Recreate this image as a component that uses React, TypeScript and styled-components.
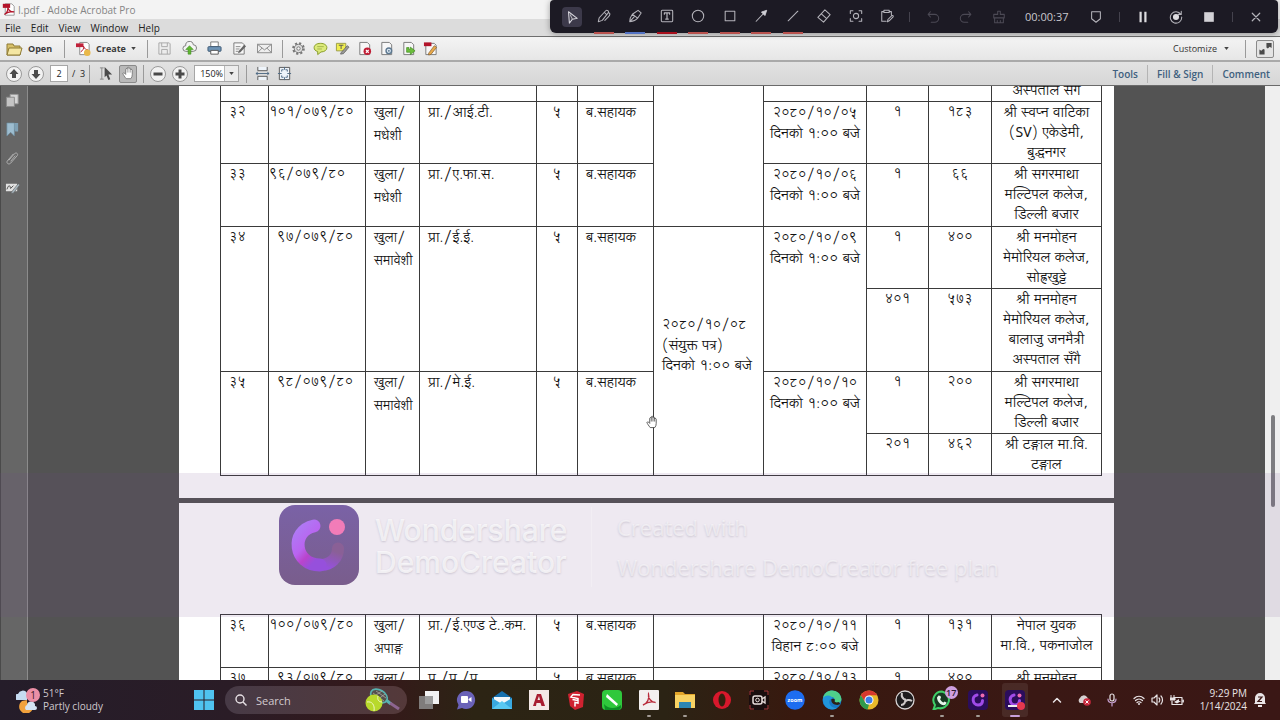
import React from 'react';
import styled, { createGlobalStyle, css } from 'styled-components';

const UI = '"Open Sans", "Noto Sans", sans-serif';
const NEPALI = '"Lohit Devanagari", "Noto Sans", serif';

const GlobalStyle = createGlobalStyle`
  * { box-sizing: border-box; }
  body { margin: 0; overflow: hidden; font-family: ${UI}; font-size: 10px; color: #222; }
  button, input, select { font: inherit; color: inherit; padding: 0; margin: 0; border: 0; background: none; }
  svg { display: block; flex: none; }
`;

const Screen = styled.div`
  display: flex;
  flex-direction: column;
  height: 100vh;
  position: relative;
`;

/* ---------- window chrome ---------- */

const TitleBar = styled.header`
  display: flex;
  align-items: center;
  gap: 3px;
  height: 19px;
  flex: none;
  padding-left: 2px;
  background: #f3f3f3;
  color: #858585;
`;

const MenuBar = styled.nav`
  display: flex;
  align-items: center;
  gap: 10px;
  height: 18px;
  flex: none;
  padding-left: 5px;
  background: #dcdcdc;
  border-bottom: 1px solid #6e6e6e;
`;

const MenuButton = styled.button`
  line-height: 16px;
`;

const ToolBar = styled.div<{ $last?: boolean }>`
  display: flex;
  align-items: center;
  height: ${p => (p.$last ? 24 : 25)}px;
  flex: none;
  padding: 0 6px 0 ${p => (p.$last ? 5 : 6)}px;
  background: ${p => (p.$last ? 'linear-gradient(#e2e2e2, #d6d6d6)' : 'linear-gradient(#f4f4f4, #e6e6e6)')};
  border-bottom: ${p => (p.$last ? '1px solid #6a6a6a' : '2px solid #a9a9a9')};
`;

const Separator = styled.span<{ $before: number; $after: number }>`
  width: 1px;
  height: 18px;
  margin-left: ${p => p.$before}px;
  margin-right: ${p => p.$after}px;
  background: #9a9a9a;
`;

const TextButton = styled.button`
  display: flex;
  align-items: center;
  gap: 5px;
  font-size: 9px;
  font-weight: 700;
  color: #3a3a3a;
`;

const IconGroup = styled.div<{ $gap: number }>`
  display: flex;
  align-items: center;
  gap: ${p => p.$gap}px;
`;

const IconButton = styled.button<{ $on?: boolean; $raised?: boolean }>`
  display: flex;
  align-items: center;
  justify-content: center;
  width: 18px;
  height: 18px;
  flex: none;
  ${p => (p.$on || p.$raised) && css`
    background: ${p.$on ? '#b9b9b9' : '#e4e4e4'};
    border: 1px solid #8a8a8a;
    border-radius: 2px;
  `}
`;

const PageInput = styled.input`
  width: 18px;
  height: 17px;
  margin-left: 5px;
  border: 1px solid #a6a6a6;
  background: #fff;
  text-align: center;
  font-size: 9px;
`;

const PageCount = styled.span`
  margin-left: 4px;
  font-size: 9px;
  white-space: pre;
`;

const ZoomBox = styled.div`
  display: flex;
  align-items: center;
  width: 45px;
  height: 17px;
  margin-left: 5px;
  border: 1px solid #a6a6a6;
  background: #fff;
`;

const ZoomSelect = styled.select`
  appearance: none;
  width: 29px;
  padding-left: 5px;
  font-size: 9px;
`;

const ZoomArrow = styled.span`
  display: flex;
  align-items: center;
  justify-content: center;
  flex: 1;
  height: 100%;
  border-left: 1px solid #b8b8b8;
  background: #ececec;
`;

const Spacer = styled.div`
  flex: 1;
`;

const CustomizeButton = styled.button`
  display: flex;
  align-items: center;
  gap: 7px;
  font-size: 9px;
  color: #333;
`;

const PaneLink = styled.button`
  padding: 0 9px;
  height: 18px;
  font-size: 10px;
  font-weight: 600;
  color: #40607e;
  & + & { border-left: 1px solid #b4b4b4; }
  &:last-child { padding-right: 4px; }
`;

/* ---------- recorder bar ---------- */

const Recorder = styled.div`
  position: absolute;
  top: 0;
  right: 2px;
  display: flex;
  align-items: center;
  height: 33px;
  padding: 0 12px;
  background: #1c1a24;
  border-radius: 4px 4px 6px 6px;
  box-shadow: 0 1px 6px rgba(0, 0, 0, 0.35);
  color: #b4b3ba;
`;

const RecorderTools = styled.div`
  display: flex;
  justify-content: space-between;
  width: 335px;
`;

const RecorderButton = styled.button<{ $on?: boolean; $ink?: string; $dim?: boolean }>`
  display: flex;
  align-items: center;
  justify-content: center;
  width: 20px;
  height: 33px;
  color: ${p => (p.$dim ? '#4b4954' : 'inherit')};
  border-bottom: 1px solid ${p => p.$ink || 'transparent'};
  border-top: 1px solid transparent;
  ${p => p.$ink && css`box-shadow: 0 1px 0 ${p.$ink};`}
  ${p => p.$on && css`
    height: 20px;
    margin: 7px 0;
    border: 0;
    border-radius: 4px;
    background: #3c394a;
  `}
`;

const RecorderRule = styled.span`
  width: 1px;
  height: 10px;
  background: #44424d;
`;

const RecorderSide = styled.div<{ $gap: number; $before: number }>`
  display: flex;
  align-items: center;
  gap: ${p => p.$gap}px;
  margin-left: ${p => p.$before}px;
`;

const Timer = styled.time`
  width: 44px;
  margin-left: 16px;
  font-size: 11px;
  color: #c9c8ce;
`;

/* ---------- document area ---------- */

const Workspace = styled.main`
  position: relative;
  display: flex;
  flex: 1;
  min-height: 0;
  overflow: hidden;
  background: #535353;
`;

const Rail = styled.aside`
  display: flex;
  flex-direction: column;
  gap: 11px;
  align-items: center;
  width: 28px;
  flex: none;
  padding: 5px 3px 0 0;
  background: #666;
  border-left: 1px solid #4a4a4a;
  border-right: 1px solid #8c8c8c;
`;

const DocumentView = styled.div`
  flex: 1;
  overflow: hidden;
`;

const Pages = styled.div`
  display: flex;
  flex-direction: column;
  align-items: center;
  gap: 5px;
  margin-top: -7px;
`;

const Page = styled.section<{ $top?: number }>`
  width: 935px;
  padding: ${p => p.$top || 0}px 13px 22px 41px;
  background: #fff;
`;

const ScheduleTable = styled.table`
  width: 100%;
  table-layout: fixed;
  border-collapse: collapse;
  font-family: ${NEPALI};
  font-size: 14px;
  line-height: 20px;
  color: #111;
`;

const Row = styled.tr<{ $h: number }>`
  height: ${p => p.$h}px;
`;

const Cell = styled.td<{ $pad?: number; $center?: boolean; $num?: boolean; $loose?: boolean; $middle?: boolean }>`
  padding: 1px 0 0 ${p => (p.$center ? 0 : p.$pad ?? 8)}px;
  border: 1px solid #3a3a3a;
  vertical-align: ${p => (p.$middle ? 'middle' : 'top')};
  text-align: ${p => (p.$center ? 'center' : 'left')};
  white-space: nowrap;
  ${p => p.$num && css`font-size: 13px;`}
  ${p => p.$loose && css`
    font-size: 13px;
    line-height: 23px;
    padding-top: 0;
  `}
  ${p => p.$middle && css`padding-bottom: 12px;`}
`;

const Digits = styled.span`
  font-size: 13px;
`;

const ScrollBar = styled.div`
  display: flex;
  flex-direction: column;
  align-items: center;
  width: 15px;
  flex: none;
  background: #efefef;
`;

const ScrollThumb = styled.div`
  width: 4px;
  height: 92px;
  margin-top: 329px;
  border-radius: 2px;
  background: #7d7d80;
`;

const Watermark = styled.div`
  position: absolute;
  top: 387px;
  left: 0;
  right: 0;
  display: flex;
  height: 144px;
  padding: 32px 0 0 279px;
  background: rgba(115, 75, 140, 0.12);
  color: rgba(255, 255, 255, 0.7);
  text-shadow: 0 1px 2px rgba(90, 80, 110, 0.22);
  pointer-events: none;
`;

const Brand = styled.div`
  width: 232px;
  padding: 9px 0 0 16px;
  font: 500 30px/32px Inter, sans-serif;
`;

const Credit = styled.div`
  height: 80px;
  margin-top: 2px;
  padding-left: 25px;
  border-left: 1px solid rgba(255, 255, 255, 0.25);
  font-size: 22px;
  line-height: 40px;
  color: rgba(255, 255, 255, 0.5);
`;

const HandCursor = styled.svg`
  position: absolute;
  left: 646px;
  top: 329px;
`;

/* ---------- taskbar ---------- */

const TaskBar = styled.footer`
  display: flex;
  align-items: center;
  height: 40px;
  flex: none;
  padding: 0 10px 0 16px;
  color: #e9e4e6;
  background: linear-gradient(90deg, #251d2a 0%, #2a1c26 18%, #35191a 30%, #2c2414 37%, #2b2314 52%, #38190f 62%, #3a1814 80%, #3a1715 100%);
`;

const Weather = styled.button`
  display: flex;
  align-items: center;
  gap: 3px;
  width: 175px;
  text-align: left;
  line-height: 13px;
`;

const WeatherText = styled.span`
  display: flex;
  flex-direction: column;
  color: #cfc8cd;
`;

const SearchBox = styled.label`
  display: flex;
  align-items: center;
  gap: 9px;
  width: 182px;
  height: 28px;
  margin-left: 8px;
  padding: 0 6px 0 10px;
  border-radius: 14px;
  background: linear-gradient(90deg, #473a46, #54393a);
`;

const SearchInput = styled.input`
  flex: 1;
  min-width: 0;
  font-size: 11px;
  outline: none;
  &::placeholder { color: #d2cacf; opacity: 1; }
`;

const Apps = styled.div`
  display: flex;
  justify-content: space-between;
  width: 612px;
  margin-left: 9px;
`;

const AppButton = styled.button<{ $active?: boolean }>`
  position: relative;
  display: flex;
  align-items: center;
  justify-content: center;
  width: 26px;
  height: 34px;
  border-radius: 3px;
  ${p => p.$active && css`background: rgba(255, 255, 255, 0.08);`}
`;

const RunningMark = styled.span<{ $wide?: boolean }>`
  position: absolute;
  bottom: 0;
  left: ${p => (p.$wide ? 8 : 11)}px;
  right: ${p => (p.$wide ? 8 : 11)}px;
  height: 2px;
  border-radius: 1px;
  background: ${p => (p.$wide ? '#c9a0dc' : '#a39c96')};
`;

const Badge = styled.span`
  position: absolute;
  top: 3px;
  right: -3px;
  min-width: 13px;
  height: 13px;
  border-radius: 7px;
  background: #cf9fe0;
  color: #2a1a33;
  font-size: 9px;
  font-weight: 600;
  line-height: 13px;
`;

const Tray = styled.div`
  display: flex;
  align-items: center;
  gap: 16px;
  margin-left: 24px;
`;

const QuickSettings = styled.button`
  display: flex;
  align-items: center;
  gap: 6px;
`;

const Clock = styled.button`
  width: 52px;
  margin-right: 3px;
  text-align: right;
  line-height: 13px;
  white-space: nowrap;
`;

/* ---------- drawings ---------- */

const AcrobatMark = ({ size }: { size: number }) => (
  <svg width={size} height={size} viewBox="0 0 16 16">
    <path d="M4 1h8l3 3v11H4z" fill="#fff" stroke="#888" />
    <path d="M1 1h9v5H1z" fill="#b3142a" />
    <path d="M3 14c3-1 5-6 4-9 1 4 4 6 8 6-5-1-8 0-12 3z" fill="none" stroke="#b3142a" strokeWidth="1.5" />
  </svg>
);

const Caret = () => <svg width="5" height="3" viewBox="0 0 6 4"><path d="M0 0h6L3 4z" fill="#444" /></svg>;

const Sheet = () => <path d="M3 1.500h8l2.500 2.500v10.500h-10.500z" fill="#f7f7f7" stroke="#777" />;

const fileIcons: Record<string, React.ReactNode> = {
  Save: <path d="M2 2h11l1 1v11H2zM5 2v4h6V2M5 14V9h6v5" fill="#ececec" stroke="#a8a8a8" />,
  'Save online': <><path d="M4 11a3 3 0 0 1 0-6 4 4 0 0 1 8-1 3.500 3.500 0 0 1 0 7z" fill="#f4f4f4" stroke="#777" /><path d="M8 5l4 4h-2.500v5h-3V9H4z" fill="#5fb830" stroke="#3c8a1c" strokeWidth=".6" /></>,
  Print: <><path d="M4 1h8v5H4z" fill="#fff" stroke="#777" /><rect x="1" y="6" width="14" height="5" rx="1" fill="#6d93b5" stroke="#3f5a74" /><path d="M4 10h8v4H4z" fill="#fff" stroke="#555" /></>,
  Sign: <><path d="M2 2h9l2 2v10H2z" fill="#f7f7f7" stroke="#777" /><path d="M4 6h5M4 8.500h4M4 11h3" stroke="#888" /><path d="M7 11l6-7 2 1.500-6 6.500-2.500 1z" fill="#666" /></>,
  Mail: <path d="M.500 3.500h15v9h-15zM.500 3.500l7.500 6 7.500-6M.500 12.500l5-5M15.500 12.500l-5-5" fill="#eee" stroke="#888" />,
};

const toolIcons: Record<string, React.ReactNode> = {
  Settings: <><circle cx="8" cy="8" r="5.500" fill="none" stroke="#777" strokeWidth="2.500" strokeDasharray="2.200 2.120" /><circle cx="8" cy="8" r="4.500" fill="#ddd" stroke="#777" /><circle cx="8" cy="8" r="1.800" fill="#f5f5f5" stroke="#777" /></>,
  'Sticky note': <><path d="M8 2.500c4.200 0 6.800 2 6.800 4.600S12.200 11.700 8.500 11.700L5 14.500v-3.300C2.300 10.500 1.200 9 1.200 7.100 1.200 4.500 3.800 2.500 8 2.500z" fill="#dcea7a" stroke="#859a28" /><path d="M4.500 6h7M4.500 8.500h5" stroke="#a3b54a" /></>,
  Highlight: <><path d="M1.500 2.500h10v8h-10z" fill="#f1ee4e" stroke="#999a4a" /><path d="M4 4.500h5M6.500 4.500v4" stroke="#555" /><path d="M6 13l7-8 2 1.500-6 7-3 .500z" fill="#999" stroke="#555" strokeWidth=".7" /></>,
  'Delete page': <><Sheet /><circle cx="11" cy="11" r="4" fill="#c01c34" /><path d="M9.500 9.500l3 3m0-3l-3 3" stroke="#fff" strokeWidth="1.300" /></>,
  'Page options': <><Sheet /><circle cx="10.500" cy="10.500" r="3" fill="#dbe8f2" stroke="#5d7890" strokeWidth="1.500" /><circle cx="10.500" cy="10.500" r="1" fill="#5d7890" /></>,
  'Export page': <><Sheet /><path d="M6 7v5h4v2.500l5-4-5-4V9H8.500V7z" fill="#6cbf3c" stroke="#3f8a1e" strokeWidth=".7" /></>,
  'Edit PDF': <><path d="M3 2.500h9l2 2v10H3z" fill="#f7f7f7" stroke="#777" /><path d="M1 1.500h8v4H1z" fill="#b3142a" /><path d="M6 13l6-8 2.500 1.800-6 7.500-2.500.700z" fill="#e8a94a" stroke="#7e5a30" strokeWidth=".7" /></>,
};

const Icon = ({ children }: { children: React.ReactNode }) => <svg width="15" height="15" viewBox="0 0 16 16" fill="none">{children}</svg>;

const RoundArrow = ({ d }: { d: string }) => (
  <svg width="18" height="18" viewBox="0 0 18 18">
    <circle cx="9" cy="9" r="7.500" fill="#f2f2f2" stroke="#999" />
    <path d={d} fill="#4a4a4a" />
  </svg>
);

const handPath = 'M4.500 13.500C3 11.500 1.500 9.500 1 8c.500-1 1.500-.700 2 0l1 1V3.500c.300-1 1.500-1 1.700 0V2c.300-1 1.600-1 1.800 0v.800c.300-.900 1.500-.900 1.800 0v1.400c.400-.800 1.600-.700 1.700.300V9c0 2-.500 3-1.500 4.500z';
const fingerPath = 'M5.700 3.500V7M7.500 2.500V7M9.300 3.500V7';

const line = { fill: 'none', stroke: 'currentColor', strokeWidth: 1.2, strokeLinejoin: 'round' as const, strokeLinecap: 'round' as const };

const recorderTools: { name: string; ink?: string; on?: boolean; art: React.ReactNode }[] = [
  { name: 'Select', on: true, art: <><path d="M4 2l10 7.500-5.500 1L5 15z" {...line} stroke="#d8d7de" /><path d="M6 5.500l2.500 5" {...line} /></> },
  { name: 'Pen', ink: '#b9534f', art: <path d="M1.500 14.500l1-4.500L10 2c1.500-1.500 4 .500 2.800 2.500L6 13zM8.500 4L11 6.500M14 4.500c1.500 1.500.500 3-1 4.500L9 13" {...line} /> },
  { name: 'Highlighter', ink: '#5373c4', art: <path d="M2 14.500c0-3 1-6 3-8.500L11.500 1.500l3.500 3-4 6C9 13 6 14 2 14.500zM2 14.500L7 9M5 6l6 4.500" {...line} /> },
  { name: 'Text', ink: '#a80f1c', art: <><rect x="1.500" y="1.500" width="13" height="13" rx="1" {...line} /><path d="M5 6V4.500h6V6M8 4.500v7M6.500 11.500h3" {...line} strokeWidth={1.4} /></> },
  { name: 'Ellipse', ink: '#b9534f', art: <circle cx="8" cy="8" r="6.500" {...line} /> },
  { name: 'Rectangle', ink: '#b9534f', art: <rect x="2.500" y="2.500" width="11" height="11" {...line} /> },
  { name: 'Arrow', ink: '#b9534f', art: <><path d="M2.500 14L12 4" {...line} /><path d="M14.500 1.500l-2 6L8.500 3.500z" fill="#d0cfd6" stroke="#d0cfd6" /></> },
  { name: 'Line', ink: '#b9534f', art: <path d="M2.500 13.500l11-11" {...line} /> },
  { name: 'Eraser', art: <path d="M1 9.500L9 1l6 5.500L7.500 15zM5 5.500L11 11" {...line} /> },
  { name: 'Spotlight', art: <><path d="M1.500 5V2h3M11.500 2h3v3M14.500 11v3h-3M4.500 14h-3v-3" {...line} /><circle cx="8" cy="8" r="3" {...line} /></> },
  { name: 'Board', art: <path d="M7 14H2V3h2.500M4.500 1.500h6v2.500h-6zM10.500 3H13v3.500M8.500 14.500l.500-2.500 4.500-4.500c1-.500 2 .500 1.500 1.500L10.500 13.500z" {...line} /> },
];

const RecIcon = ({ children, size = 14 }: { children: React.ReactNode; size?: number }) => <svg width={size} height={size} viewBox="0 0 16 16">{children}</svg>;

const DemoLogo = ({ size }: { size: number }) => (
  <svg width={size} height={size} viewBox="0 0 80 80">
    <defs>
      <linearGradient id="tile" x1="0" y1="0" x2="0" y2="1"><stop offset="0" stopColor="#7a62a6" /><stop offset="1" stopColor="#795d8c" /></linearGradient>
      <linearGradient id="ring" x1="0" y1="0" x2=".6" y2="1"><stop offset="0" stopColor="#ae7bf5" /><stop offset=".5" stopColor="#b964f0" /><stop offset=".75" stopColor="#b944cc" /><stop offset="1" stopColor="#9650dc" /></linearGradient>
      <linearGradient id="tail" x1="0" y1="1" x2=".4" y2="0"><stop offset="0" stopColor="#9650dc" /><stop offset="1" stopColor="#8a6096" /></linearGradient>
    </defs>
    <rect width="80" height="80" rx="16" fill="url(#tile)" />
    <path d="M42 60c10-.500 17-7 17-16.500" fill="none" stroke="url(#tail)" strokeWidth="12" strokeLinecap="round" />
    <path d="M35 21C11 26 15 60 41 60" fill="none" stroke="url(#ring)" strokeWidth="13" strokeLinecap="round" />
    <circle cx="58" cy="22" r="8" fill="#f27cb8" />
  </svg>
);

const DarkDemoLogo = ({ recording }: { recording?: boolean }) => (
  <>
    <rect width="20" height="20" rx="4" fill="#2b0d5c" />
    <path d="M9 5C3 6 4.500 15 10 15c3 0 4.500-2 4.500-4.500" fill="none" stroke="#a04be8" strokeWidth="3" strokeLinecap="round" />
    <circle cx="14.500" cy="5.500" r="2" fill="#f06bb0" />
    {recording && <><path d="M3 16h11" stroke="#eee" strokeWidth="2" /><circle cx="16" cy="16" r="4" fill="#e5394f" /></>}
  </>
);

const apps: { name: string; running?: boolean; active?: boolean; badge?: string; art: React.ReactNode }[] = [
  { name: 'Task view', art: <><rect x="6" y="1" width="14" height="13" fill="#f2f2f2" /><rect x="0" y="6" width="14" height="13" fill="#8d8d8d" opacity=".85" /></> },
  { name: 'Chat', art: <><path d="M10 1a9 9 0 1 1-4 17l-5 1.500L2.500 15A9 9 0 0 1 10 1z" fill="#6a62b8" /><rect x="5" y="6" width="7" height="7" rx="1" fill="#fff" /><path d="M12.500 9l3-2v5l-3-2z" fill="#fff" /></> },
  { name: 'Mail', art: <><path d="M0 8l10-7 10 7v11H0z" fill="#1670ae" /><path d="M2 7h16v6H2z" fill="#f3f7fa" /><path d="M0 8l10 6 10-6v11H0z" fill="#39a9e0" /><path d="M0 19l10-8 10 8z" fill="#58c8f2" /></> },
  { name: 'AutoCAD', art: <><rect width="20" height="20" fill="#f4e8e6" /><path d="M4 16L8 4h4l4 12h-3.500l-1-3h-4l-.500 3zM8.500 10h2.500L10 6z" fill="#a81c30" fillRule="evenodd" /></> },
  { name: 'SketchUp', art: <><path d="M2 4l9-3 7 3-1 13-8 3-5-4z" fill="#cf2230" /><path d="M14 5L7 4.500 5 7l7 1.500v2L6.500 9.500M12 10.500V13l-3-.500v4" fill="none" stroke="#fff" strokeWidth="1.500" /></> },
  { name: 'CorelDRAW', art: <><rect width="20" height="20" rx="4" fill="#2fc83c" /><path d="M2 14c4 5 12 5 17 1v3l-2 2H3z" fill="#0d8f25" /><path d="M5 4l11 10-1.500 2L4 7z" fill="#fff" /></> },
  { name: 'Acrobat', running: true, art: <><rect width="20" height="20" rx="1" fill="#f3efef" /><path d="M4 15c4-1 7-7 5.500-11-1 4 3 8.500 7 8.500-4-1.500-8-.500-12.500 2.500z" fill="none" stroke="#b92a3a" strokeWidth="1.300" /></> },
  { name: 'File Explorer', running: true, art: <><path d="M0 2h8l2 2h10v5H0z" fill="#e3a52a" /><path d="M0 5h20v13H0z" fill="#f8d263" /><path d="M4 12h12v6H4z" fill="#2c86b4" /></> },
  { name: 'Opera', art: <><circle cx="10" cy="10" r="9" fill="#d8182c" /><ellipse cx="10" cy="10" rx="3.500" ry="6.500" fill="#33200f" /></> },
  { name: 'Screen recorder', art: <><rect width="20" height="20" rx="2" fill="#1a0d0f" /><path d="M1 5V1h4M15 1h4v4M19 15v4h-4M5 19H1v-4" fill="none" stroke="#a93a3a" /><rect x="4" y="6" width="9" height="8" rx="2" fill="none" stroke="#e9dede" strokeWidth="1.500" /><circle cx="8.500" cy="10" r="1.800" fill="none" stroke="#e9dede" /><path d="M13 9l3-2v6l-3-2" fill="none" stroke="#e9dede" strokeWidth="1.300" /></> },
  { name: 'Zoom', art: <><circle cx="10" cy="10" r="9.800" fill="#1d6df0" /><text x="10" y="12" textAnchor="middle" fontSize="5.500" fontWeight="700" fill="#fff">zoom</text></> },
  { name: 'Edge', running: true, art: <><circle cx="10" cy="10" r="9.500" fill="#1878c6" /><path d="M1 8C3-2 18-2 19.500 9c0 4-5 5-7 3 1-2 0-5-3-5C5 7 2 7 1 8z" fill="#4fd08a" /><path d="M1 8c3-4 9-3 10 1-4-1-5 4-2 7 2 2 6 3 8 0-5 7-17 3-16-8z" fill="#2196dc" /><path d="M9.500 9c-1 3 2 6 6 6l3-1-2-2c-2 1-4 0-4-1 1-1 0-3-3-2z" fill="#2c2016" /></> },
  { name: 'Chrome', art: <><circle cx="10" cy="10" r="9.500" fill="#e8b92a" /><path d="M1.800 5.300a9.500 9.500 0 0 1 16.500 0H10L6 12z" fill="#d8392e" /><path d="M1.800 5.300L6 12l4 2.500-1.500 5A9.500 9.500 0 0 1 1.800 5.300z" fill="#2f9a4c" /><circle cx="10" cy="10" r="4.500" fill="#fff" /><circle cx="10" cy="10" r="3.500" fill="#3d7ee8" /></> },
  { name: 'OBS', art: <><circle cx="10" cy="10" r="9" fill="#1e1c1e" stroke="#d6d3d3" strokeWidth="1.300" /><path d="M7 3c-1 4 1 6 4 7M17 11c-3-2-6-1-7.500 1.500M6 15c3 0 5-3 4-6" fill="none" stroke="#cfcaca" strokeWidth="2" /></> },
  { name: 'WhatsApp', running: true, badge: '17', art: <><path d="M10 1.500A8.500 8.500 0 1 1 6 18l-4.500 1.500L3 15A8.500 8.500 0 0 1 10 1.500z" fill="#163a22" stroke="#3fd068" strokeWidth="2" /><path d="M6.500 5.500l2 .500.500 2-1 1c1 2 2 3 3.500 3.500l1-1 2 1c0 2-2 3-4 2.500C7 14 5 10 5 7.500z" fill="#e7f6ea" /></> },
  { name: 'DemoCreator', running: true, art: <DarkDemoLogo /> },
  { name: 'DemoCreator recorder', active: true, art: <DarkDemoLogo recording /> },
];

/* ---------- schedule ---------- */

const Columns = () => (
  <colgroup>
    {[48, 97, 54, 117, 41, 76, 110, 103, 62, 63, 110].map((w, i) => <col key={i} style={{ width: w }} />)}
  </colgroup>
);

const Lines = ({ of }: { of: string[] }) => <>{of.map((t, i) => <React.Fragment key={t}>{i > 0 && <br />}{t}</React.Fragment>)}</>;

type Exam = { no: string; notice: string; group: string[]; service: string; span?: number; tight?: boolean };

const ExamCells = ({ no, notice, group, service, span = 1, tight }: Exam) => (
  <>
    <Cell rowSpan={span} $num>{no}</Cell>
    <Cell rowSpan={span} $num $pad={tight ? 0 : 8}>{notice}</Cell>
    <Cell rowSpan={span} $loose><Lines of={group} /></Cell>
    <Cell rowSpan={span}>{service}</Cell>
    <Cell rowSpan={span} $center $num>५</Cell>
    <Cell rowSpan={span}>ब.सहायक</Cell>
  </>
);

const DateCell = ({ date, time = 'दिनको १:०० बजे', span = 1 }: { date: string; time?: string; span?: number }) => (
  <Cell rowSpan={span} $center><Digits>{date}</Digits><br />{time}</Cell>
);

const Seats = ({ from, to, venue }: { from: string; to: string; venue: string[] }) => (
  <>
    <Cell $center $num>{from}</Cell>
    <Cell $center $num>{to}</Cell>
    <Cell $center><Lines of={venue} /></Cell>
  </>
);

const MULTIPLE = ['श्री सगरमाथा', 'मल्टिपल कलेज,', 'डिल्\u200Dली बजार'];

const FirstPage = () => (
  <Page>
    <ScheduleTable lang="ne">
      <Columns />
      <tbody>
        <Row $h={22}>
          <Cell /><Cell /><Cell /><Cell /><Cell /><Cell /><Cell rowSpan={3} /><Cell /><Cell /><Cell />
          <Cell $center>अस्पताल सँगै</Cell>
        </Row>
        <Row $h={62}>
          <ExamCells no="३२" notice="१०१/०७९/८०" group={['खुला/', 'मधेशी']} service="प्रा./आई.टी." tight />
          <DateCell date="२०८०/१०/०५" />
          <Seats from="१" to="१८३" venue={['श्री स्वप्न वाटिका', '(SV) एकेडेमी,', 'बुद्धनगर']} />
        </Row>
        <Row $h={63}>
          <ExamCells no="३३" notice="९६/०७९/८०" group={['खुला/', 'मधेशी']} service="प्रा./ए.फा.स." tight />
          <DateCell date="२०८०/१०/०६" />
          <Seats from="१" to="६६" venue={MULTIPLE} />
        </Row>
        <Row $h={62}>
          <ExamCells no="३४" notice="९७/०७९/८०" group={['खुला/', 'समावेशी']} service="प्रा./ई.ई." span={2} />
          <Cell rowSpan={4} $middle><Digits>२०८०/१०/०८</Digits><br />(संयुक्त पत्र)<br />दिनको १:०० बजे</Cell>
          <DateCell date="२०८०/१०/०९" span={2} />
          <Seats from="१" to="४००" venue={['श्री मनमोहन', 'मेमोरियल कलेज,', 'सोह्रखुट्टे']} />
        </Row>
        <Row $h={83}>
          <Seats from="४०१" to="५७३" venue={['श्री मनमोहन', 'मेमोरियल कलेज,', 'बालाजु जनमैत्री', 'अस्पताल सँगै']} />
        </Row>
        <Row $h={62}>
          <ExamCells no="३५" notice="९८/०७९/८०" group={['खुला/', 'समावेशी']} service="प्रा./मे.ई." span={2} />
          <DateCell date="२०८०/१०/१०" span={2} />
          <Seats from="१" to="२००" venue={MULTIPLE} />
        </Row>
        <Row $h={42}>
          <Seats from="२०१" to="४६२" venue={['श्री टङ्गाल मा.वि.', 'टङ्गाल']} />
        </Row>
      </tbody>
    </ScheduleTable>
  </Page>
);

const SecondPage = () => (
  <Page $top={111}>
    <ScheduleTable lang="ne">
      <Columns />
      <tbody>
        <Row $h={53}>
          <ExamCells no="३६" notice="१००/०७९/८०" group={['खुला/', 'अपाङ्ग']} service="प्रा./ई.एण्ड टे..कम." tight />
          <Cell />
          <DateCell date="२०८०/१०/११" time="विहान ८:०० बजे" />
          <Seats from="१" to="१३१" venue={['नेपाल युवक', 'मा.वि., पकनाजोल']} />
        </Row>
        <Row $h={62}>
          <ExamCells no="३७" notice="९३/०७९/८०" group={['खुला/']} service="प्र./प्र./प्र." />
          <Cell />
          <Cell $center $num>२०८०/१०/१३</Cell>
          <Seats from="१" to="४००" venue={['श्री मनमोहन']} />
        </Row>
      </tbody>
    </ScheduleTable>
  </Page>
);

/* ---------- screen ---------- */

const RecorderBar = () => (
  <Recorder>
    <RecorderTools>
      {recorderTools.map(t => (
        <RecorderButton key={t.name} aria-label={t.name} $on={t.on} $ink={t.ink}><RecIcon>{t.art}</RecIcon></RecorderButton>
      ))}
    </RecorderTools>
    <RecorderSide $before={12} $gap={13}>
      <RecorderRule />
      <RecorderButton aria-label="Undo" $dim><RecIcon><path d="M5 2L2.500 5 5 8M2.500 5H10a4.500 4.500 0 0 1 0 9H6" {...line} /></RecIcon></RecorderButton>
      <RecorderButton aria-label="Redo" $dim><RecIcon><path d="M11 2l2.500 3L11 8M13.500 5H6a4.500 4.500 0 0 0 0 9h4" {...line} /></RecIcon></RecorderButton>
      <RecorderButton aria-label="Clear" $dim><RecIcon><path d="M6.500 5V1.500h3V5H14v4H2V5zM3 9v5.500h10V9M6 14.500V12M9.500 14.500V12" {...line} /></RecIcon></RecorderButton>
    </RecorderSide>
    <Timer>00:00:37</Timer>
    <RecorderSide $before={17} $gap={13}>
      <RecorderButton aria-label="Marker"><RecIcon><path d="M3 2h10v8l-5 4-5-4z" {...line} /></RecIcon></RecorderButton>
      <RecorderRule />
      <RecorderButton aria-label="Pause"><RecIcon><path d="M4 2h2.500v12H4zM9.500 2H12v12H9.500z" fill="#dddce0" /></RecIcon></RecorderButton>
      <RecorderButton aria-label="Restart"><RecIcon><path d="M13.500 5A6.500 6.500 0 1 0 14.500 8M14 1.500V5h-3.500" {...line} /><circle cx="8" cy="8" r="3.500" fill="#dddce0" /></RecIcon></RecorderButton>
      <RecorderButton aria-label="Stop"><RecIcon><path d="M2.500 2.500h11v11h-11z" fill="#d2d1d6" /></RecIcon></RecorderButton>
      <RecorderRule />
      <RecorderButton aria-label="Close"><RecIcon size={12}><path d="M3 3l10 10M13 3L3 13" {...line} strokeWidth={1.6} /></RecIcon></RecorderButton>
    </RecorderSide>
  </Recorder>
);

export default function App() {
  return (
    <Screen>
      <GlobalStyle />
      <TitleBar><AcrobatMark size={13} />I.pdf - Adobe Acrobat Pro</TitleBar>
      <MenuBar>
        {['File', 'Edit', 'View', 'Window', 'Help'].map(m => <MenuButton key={m}>{m}</MenuButton>)}
      </MenuBar>
      <ToolBar>
        <TextButton>
          <svg width="17" height="14" viewBox="0 0 17 14"><path d="M1 2h6l1 2h6v9H1z" fill="#d8c16a" stroke="#8e7a34" /><path d="M3 6h13l-2 7H1z" fill="#f4e6a2" stroke="#8e7a34" /></svg>
          Open
        </TextButton>
        <Separator $before={12} $after={11} />
        <TextButton>
          <svg width="15" height="16" viewBox="0 0 16 16"><path d="M4 1h8l2 2v11H4z" fill="#fff" stroke="#888" /><path d="M0 2h8v4H0z" fill="#c0223a" /><path d="M5 11c2-1 4-4 3-6 1 3 3 4 5 4" fill="none" stroke="#b3142a" /><circle cx="12" cy="12" r="3.500" fill="#e9b84a" /></svg>
          Create <Caret />
        </TextButton>
        <Separator $before={11} $after={8} />
        <IconGroup $gap={7}>
          {Object.entries(fileIcons).map(([k, v]) => <IconButton key={k} aria-label={k}><Icon>{v}</Icon></IconButton>)}
        </IconGroup>
        <Separator $before={8} $after={7} />
        <IconGroup $gap={4}>
          {Object.entries(toolIcons).map(([k, v]) => <IconButton key={k} aria-label={k}><Icon>{v}</Icon></IconButton>)}
        </IconGroup>
        <Spacer />
        <CustomizeButton>Customize <Caret /></CustomizeButton>
        <Separator $before={16} $after={10} />
        <IconButton $raised aria-label="Read mode">
          <Icon><path d="M9 7V2h5.500v5.500L12.500 6l-2 2zM7 9v5.500H1.500V9l2 1.500 2-2z" fill="#4a4a4a" /></Icon>
        </IconButton>
      </ToolBar>
      <ToolBar $last>
        <IconGroup $gap={4}>
          <IconButton aria-label="Previous page"><RoundArrow d="M9 4l4.500 5H11v4H7V9H4.500z" /></IconButton>
          <IconButton aria-label="Next page"><RoundArrow d="M9 14l4.500-5H11V5H7v4H4.500z" /></IconButton>
        </IconGroup>
        <PageInput aria-label="Page" defaultValue="2" />
        <PageCount>/  3</PageCount>
        <Separator $before={4} $after={7} />
        <IconGroup $gap={4}>
          <IconButton aria-label="Select"><Icon><path d="M1 2h4M3 2v12M1 14h4" stroke="#888" /><path d="M6 1l8 8h-4l2 5-2 1-2-5-2 2z" fill="#4a4a4a" /></Icon></IconButton>
          <IconButton $on aria-label="Hand"><Icon><g transform="translate(1 0)"><path d={handPath} fill="#fff" stroke="#666" strokeWidth=".8" /><path d={fingerPath} stroke="#888" strokeWidth=".7" /></g></Icon></IconButton>
        </IconGroup>
        <Separator $before={6} $after={5} />
        <IconGroup $gap={4}>
          <IconButton aria-label="Zoom out"><RoundArrow d="M4.500 7.500h9v3h-9z" /></IconButton>
          <IconButton aria-label="Zoom in"><RoundArrow d="M7.500 4.500h3v3h3v3h-3v3h-3v-3h-3v-3h3z" /></IconButton>
        </IconGroup>
        <ZoomBox>
          <ZoomSelect aria-label="Zoom level" defaultValue="150%"><option>150%</option></ZoomSelect>
          <ZoomArrow><Caret /></ZoomArrow>
        </ZoomBox>
        <Separator $before={7} $after={6} />
        <IconGroup $gap={4}>
          <IconButton aria-label="Fit width"><Icon><path d="M3 1v4h10V1M3 15v-4h10v4" fill="#eef4fa" stroke="#555" /><path d="M1 8h14M3 6.500L1 8l2 1.500M13 6.500L15 8l-2 1.500" stroke="#4e6a84" /></Icon></IconButton>
          <IconButton aria-label="Fit page"><Icon><path d="M2.500 1.500h11v13h-11z" fill="#eef4fa" stroke="#555" /><path d="M5 6V4h2M9 4h2v2M11 10v2H9M7 12H5v-2M1 8h4M11 8h4M8 1v3M8 12v3" stroke="#4e6a84" /></Icon></IconButton>
        </IconGroup>
        <Spacer />
        {['Tools', 'Fill & Sign', 'Comment'].map(t => <PaneLink key={t}>{t}</PaneLink>)}
      </ToolBar>

      <Workspace>
        <Rail>
          <IconButton aria-label="Page thumbnails"><Icon><path d="M5.500 1.500H14v10H5.500z" fill="#d5d5d5" stroke="#999" /><path d="M1.500 4.500H10v10H1.500z" fill="#c4c4c4" stroke="#8a8a8a" /></Icon></IconButton>
          <IconButton aria-label="Bookmarks"><Icon><path d="M7 1h7v9h-3" fill="#7fa0b4" /><path d="M2 1h8v14l-4-4-4 4z" fill="#9dbdd0" stroke="#6b8b9e" strokeWidth=".7" /></Icon></IconButton>
          <IconButton aria-label="Attachments"><Icon><path d="M4 10l6-7c2-2 4.500 0 3 2l-7 8c-2 2-5 0-3.500-2.500L9 3M6 11l5-6" stroke="#b4b4b4" /></Icon></IconButton>
          <IconButton aria-label="Signatures"><Icon><path d="M1 4h12v8H1z" fill="#e2e2e2" /><path d="M2 10c2-5 3-5 4-1l3-3" stroke="#444" /><path d="M6 14l8-10 2 1-7 9z" fill="#aab8c0" stroke="#555" strokeWidth=".6" /></Icon></IconButton>
        </Rail>
        <DocumentView>
          <Pages>
            <FirstPage />
            <SecondPage />
          </Pages>
        </DocumentView>
        <ScrollBar><ScrollThumb /></ScrollBar>
        <Watermark>
          <DemoLogo size={80} />
          <Brand>Wondershare<br />DemoCreator</Brand>
          <Credit>Created with<br />Wondershare DemoCreator free plan</Credit>
        </Watermark>
        <HandCursor width="13" height="14" viewBox="0 0 14 15"><path d={handPath} fill="#fff" stroke="#444" strokeWidth=".9" /><path d={fingerPath} stroke="#444" strokeWidth=".8" /></HandCursor>
      </Workspace>

      <TaskBar>
        <Weather>
          <svg width="24" height="26" viewBox="0 0 24 26">
            <path d="M6 14a7 7 0 1 0 11 7 7 7 0 0 1-6-8z" fill="#f0a13c" />
            <path d="M1 13a3 3 0 0 1 1-6 5 5 0 0 1 9-1v7z" fill="#c6dcf2" />
            <path d="M10 23a3 3 0 0 1 1-5 4 4 0 0 1 8 1 2 2 0 0 1 0 4z" fill="#d5e4f3" />
            <circle cx="17" cy="8" r="7" fill="#ec8fa6" />
            <text x="17" y="12" textAnchor="middle" fontSize="10" fill="#3a1a24">1</text>
          </svg>
          <WeatherText><span>51°F</span><span>Partly cloudy</span></WeatherText>
        </Weather>
        <AppButton aria-label="Start">
          <svg width="20" height="20" viewBox="0 0 20 20"><path d="M0 0h9.500v9.500H0zM10.500 0H20v9.500h-9.500zM0 10.500h9.500V20H0zM10.500 10.500H20V20h-9.500z" fill="#4fc3f0" /></svg>
        </AppButton>
        <SearchBox>
          <svg width="12" height="12" viewBox="0 0 12 12"><circle cx="5" cy="5" r="4" fill="none" stroke="#e6e0e4" strokeWidth="1.400" /><path d="M8 8l3.500 3.500" stroke="#e6e0e4" strokeWidth="1.400" /></svg>
          <SearchInput aria-label="Search" placeholder="Search" />
          <svg width="36" height="24" viewBox="0 0 36 24">
            <ellipse cx="14" cy="8" rx="9" ry="6" transform="rotate(30 14 8)" fill="#54504c" stroke="#58b3b0" strokeWidth="1.600" />
            <path d="M8 5l11 8M11 3l10 7M8 9l9-6M12 12l8-6" stroke="#b6b0aa" strokeWidth=".7" />
            <path d="M21 12l5 4" stroke="#58b3b0" strokeWidth="3" /><path d="M25 15l9 6" stroke="#8d6590" strokeWidth="3" />
            <circle cx="9" cy="15" r="8.500" fill="#b8d92c" /><path d="M2 14c5-1 8 3 7 9M13 8c-1 4 1 6 4 6" fill="none" stroke="#f0f7c4" />
          </svg>
        </SearchBox>
        <Apps>
          {apps.map(a => (
            <AppButton key={a.name} aria-label={a.name} $active={a.active}>
              <svg width="20" height="20" viewBox="0 0 20 20">{a.art}</svg>
              {a.badge && <Badge>{a.badge}</Badge>}
              {(a.running || a.active) && <RunningMark $wide={a.active} />}
            </AppButton>
          ))}
        </Apps>
        <Tray>
          <svg width="10" height="10" viewBox="0 0 10 10"><path d="M1.500 7L5 3.500 8.500 7" {...line} strokeWidth={1.5} /></svg>
          <svg width="13" height="12" viewBox="0 0 13 12"><path d="M2 9a3 3 0 0 1 0-5 4 4 0 0 1 7-1l2 3v3z" fill="#d6d0d0" /><circle cx="9" cy="8" r="3.800" fill="#c8283c" /><path d="M7.500 6.500l3 3m0-3l-3 3" stroke="#fff" /></svg>
          <svg width="10" height="14" viewBox="0 0 10 14"><rect x="3" y="1" width="4" height="7" rx="2" {...line} /><path d="M1 6c0 5 8 5 8 0M5 10v3" {...line} stroke="#c8a3d4" /></svg>
          <QuickSettings aria-label="Quick settings">
            <svg width="12" height="12" viewBox="0 0 12 12"><path d="M1 4.500c3-3 7-3 10 0M2.500 6.500c2-2 5-2 7 0M4 8.500c1-1 3-1 4 0" {...line} /><circle cx="6" cy="10" r="1" fill="currentColor" /></svg>
            <svg width="13" height="12" viewBox="0 0 13 12"><path d="M1 4h2l3-3v10L3 8H1zM8 4c1 1 1 3 0 4M10 2c2 2 2 6 0 8" {...line} /></svg>
            <svg width="14" height="12" viewBox="0 0 14 12"><path d="M4 3.500h8v7H2V7M13.300 6v2" {...line} /><path d="M1 1v3M4 1v3M0 4h5v2H0z" stroke="currentColor" fill="currentColor" /><path d="M4 8l5-3v2h2L7 9.500z" fill="currentColor" /></svg>
          </QuickSettings>
        </Tray>
        <Spacer />
        <Clock>9:29 PM<br />1/14/2024</Clock>
        <svg width="20" height="16" viewBox="0 0 20 16"><path d="M4 12l1-1.500V6a5 5 0 0 1 10 0v4.500l1 1.500z" fill="#e9e4e6" /><path d="M8 14h4" stroke="#e9e4e6" strokeWidth="2" /><path d="M8 5h4L8 9.500h4" fill="none" stroke="#3a1715" strokeWidth="1.200" /></svg>
      </TaskBar>
      <RecorderBar />
    </Screen>
  );
}
